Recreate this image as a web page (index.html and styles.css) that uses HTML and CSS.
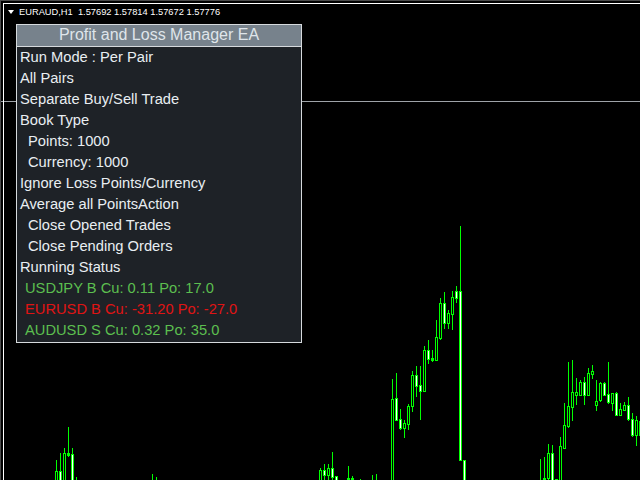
FILE: index.html
```html
<!DOCTYPE html>
<html>
<head>
<meta charset="utf-8">
<link rel="stylesheet" href="styles.css">
</head>
<body>
<div class="screen">
  <svg class="plot" width="640" height="480" viewBox="0 0 640 480" shape-rendering="crispEdges">
    <rect class="pl" x="0" y="101" width="640" height="1"/>
    <g class="g">
      <rect x="56" y="460" width="1" height="20"/><rect x="55" y="471" width="3" height="10"/>
      <rect x="60" y="453" width="1" height="27"/><rect x="59" y="471" width="3" height="10"/>
      <rect x="64" y="448" width="1" height="32"/><rect x="63" y="453" width="3" height="28"/>
      <rect x="68" y="427" width="1" height="30"/><rect x="67" y="453" width="3" height="3"/>
      <rect x="72" y="448" width="1" height="32"/><rect x="71" y="454" width="3" height="27"/>
      <rect x="76" y="477" width="1" height="3"/>
      <rect x="152" y="474" width="1" height="6"/>
      <rect x="156" y="477" width="1" height="3"/>
      <rect x="320" y="468" width="1" height="12"/><rect x="319" y="470" width="3" height="11"/>
      <rect x="324" y="464" width="1" height="16"/><rect x="323" y="470" width="3" height="6"/>
      <rect x="328" y="464" width="1" height="16"/><rect x="327" y="468" width="3" height="8"/>
      <rect x="332" y="452" width="1" height="28"/><rect x="331" y="468" width="3" height="10"/>
      <rect x="335" y="476" width="3" height="5"/>
      <rect x="348" y="466" width="1" height="14"/><rect x="347" y="478" width="3" height="3"/>
      <rect x="352" y="476" width="1" height="4"/><rect x="351" y="478" width="3" height="3"/>
      <rect x="360" y="479" width="1" height="1"/>
      <rect x="372" y="475" width="1" height="5"/>
      <rect x="376" y="474" width="1" height="6"/>
      <rect x="392" y="379" width="1" height="101"/><rect x="391" y="399" width="3" height="82"/>
      <rect x="396" y="373" width="1" height="47"/><rect x="395" y="398" width="3" height="23"/>
      <rect x="400" y="409" width="1" height="21"/><rect x="399" y="419" width="3" height="10"/>
      <rect x="404" y="420" width="1" height="18"/><rect x="403" y="423" width="3" height="6"/>
      <rect x="408" y="404" width="1" height="26"/><rect x="407" y="406" width="3" height="19"/>
      <rect x="412" y="371" width="1" height="41"/><rect x="411" y="375" width="3" height="32"/>
      <rect x="416" y="366" width="1" height="31"/><rect x="415" y="375" width="3" height="12"/>
      <rect x="420" y="366" width="1" height="54"/><rect x="419" y="385" width="3" height="7"/>
      <rect x="424" y="346" width="1" height="45"/><rect x="423" y="350" width="3" height="42"/>
      <rect x="428" y="340" width="1" height="24"/><rect x="427" y="350" width="3" height="10"/>
      <rect x="432" y="350" width="1" height="12"/><rect x="431" y="358" width="3" height="3"/>
      <rect x="436" y="320" width="1" height="40"/><rect x="435" y="337" width="3" height="24"/>
      <rect x="440" y="298" width="1" height="42"/><rect x="439" y="303" width="3" height="36"/>
      <rect x="444" y="292" width="1" height="37"/><rect x="443" y="303" width="3" height="21"/>
      <rect x="448" y="310" width="1" height="19"/><rect x="447" y="313" width="3" height="11"/>
      <rect x="452" y="291" width="1" height="39"/><rect x="451" y="297" width="3" height="18"/>
      <rect x="456" y="286" width="1" height="17"/><rect x="455" y="291" width="3" height="8"/>
      <rect x="460" y="226" width="1" height="234"/><rect x="459" y="291" width="3" height="170"/>
      <rect x="463" y="460" width="3" height="21"/>
      <rect x="540" y="459" width="1" height="21"/>
      <rect x="544" y="457" width="1" height="23"/><rect x="543" y="478" width="3" height="3"/>
      <rect x="548" y="444" width="1" height="36"/><rect x="547" y="453" width="3" height="26"/>
      <rect x="552" y="445" width="1" height="35"/><rect x="551" y="453" width="3" height="28"/>
      <rect x="555" y="479" width="3" height="2"/>
      <rect x="560" y="437" width="1" height="43"/><rect x="559" y="446" width="3" height="35"/>
      <rect x="564" y="403" width="1" height="46"/><rect x="563" y="425" width="3" height="24"/>
      <rect x="568" y="362" width="1" height="66"/><rect x="567" y="406" width="3" height="21"/>
      <rect x="572" y="360" width="1" height="61"/><rect x="571" y="392" width="3" height="16"/>
      <rect x="576" y="378" width="1" height="27"/><rect x="575" y="392" width="3" height="4"/>
      <rect x="580" y="380" width="1" height="16"/><rect x="579" y="382" width="3" height="14"/>
      <rect x="584" y="377" width="1" height="28"/><rect x="583" y="382" width="3" height="14"/>
      <rect x="588" y="368" width="1" height="28"/><rect x="587" y="373" width="3" height="23"/>
      <rect x="592" y="365" width="1" height="14"/><rect x="591" y="371" width="3" height="4"/>
      <rect x="596" y="380" width="1" height="31"/><rect x="595" y="401" width="3" height="5"/>
      <rect x="600" y="382" width="1" height="20"/><rect x="599" y="383" width="3" height="18"/>
      <rect x="604" y="382" width="1" height="14"/><rect x="603" y="383" width="3" height="13"/>
      <rect x="608" y="362" width="1" height="42"/><rect x="607" y="394" width="3" height="9"/>
      <rect x="612" y="393" width="1" height="18"/><rect x="611" y="393" width="3" height="11"/>
      <rect x="616" y="392" width="1" height="24"/><rect x="615" y="393" width="3" height="23"/>
      <rect x="620" y="403" width="1" height="13"/><rect x="619" y="409" width="3" height="7"/>
      <rect x="624" y="402" width="1" height="9"/><rect x="623" y="405" width="3" height="6"/>
      <rect x="628" y="397" width="1" height="24"/><rect x="627" y="405" width="3" height="15"/>
      <rect x="632" y="413" width="1" height="24"/><rect x="631" y="419" width="3" height="17"/>
      <rect x="636" y="416" width="1" height="30"/><rect x="635" y="420" width="3" height="16"/>
      <rect x="639" y="421" width="3" height="15"/>
    </g>
    <g class="wf">
      <rect x="60" y="472" width="1" height="9"/>
      <rect x="72" y="455" width="1" height="26"/>
      <rect x="324" y="471" width="1" height="4"/>
      <rect x="332" y="469" width="1" height="8"/>
      <rect x="336" y="477" width="1" height="4"/>
      <rect x="396" y="399" width="1" height="21"/>
      <rect x="400" y="420" width="1" height="8"/>
      <rect x="416" y="376" width="1" height="10"/>
      <rect x="420" y="386" width="1" height="5"/>
      <rect x="428" y="351" width="1" height="8"/>
      <rect x="444" y="304" width="1" height="19"/>
      <rect x="456" y="292" width="1" height="6"/>
      <rect x="460" y="292" width="1" height="168"/>
      <rect x="464" y="461" width="1" height="20"/>
      <rect x="552" y="454" width="1" height="27"/>
      <rect x="584" y="383" width="1" height="12"/>
      <rect x="604" y="384" width="1" height="11"/>
      <rect x="608" y="395" width="1" height="7"/>
      <rect x="616" y="394" width="1" height="21"/>
      <rect x="628" y="406" width="1" height="13"/>
      <rect x="632" y="420" width="1" height="15"/>
    </g>
    <g class="bf">
      <rect x="56" y="472" width="1" height="9"/>
      <rect x="64" y="454" width="1" height="27"/>
      <rect x="320" y="471" width="1" height="10"/>
      <rect x="328" y="469" width="1" height="6"/>
      <rect x="392" y="400" width="1" height="81"/>
      <rect x="404" y="424" width="1" height="4"/>
      <rect x="408" y="407" width="1" height="17"/>
      <rect x="412" y="376" width="1" height="30"/>
      <rect x="424" y="351" width="1" height="40"/>
      <rect x="436" y="338" width="1" height="22"/>
      <rect x="440" y="304" width="1" height="34"/>
      <rect x="448" y="314" width="1" height="9"/>
      <rect x="452" y="298" width="1" height="16"/>
      <rect x="548" y="454" width="1" height="24"/>
      <rect x="560" y="447" width="1" height="34"/>
      <rect x="564" y="426" width="1" height="22"/>
      <rect x="568" y="407" width="1" height="19"/>
      <rect x="572" y="393" width="1" height="14"/>
      <rect x="576" y="393" width="1" height="2"/>
      <rect x="580" y="383" width="1" height="12"/>
      <rect x="588" y="374" width="1" height="21"/>
      <rect x="592" y="372" width="1" height="2"/>
      <rect x="596" y="402" width="1" height="3"/>
      <rect x="600" y="384" width="1" height="16"/>
      <rect x="612" y="394" width="1" height="9"/>
      <rect x="620" y="410" width="1" height="5"/>
      <rect x="624" y="406" width="1" height="4"/>
      <rect x="636" y="421" width="1" height="14"/>
    </g>
  </svg>

  <div class="chart">
    <div class="header">
      <span class="tri"></span>
      <span class="quote">EURAUD,H1  1.57692 1.57814 1.57672 1.57776</span>
    </div>
  </div>

  <div class="panel">
    <div class="title">Profit and Loss Manager EA</div>
    <div class="rows">
      <div class="row">Run Mode : Per Pair</div>
      <div class="row">All Pairs</div>
      <div class="row">Separate Buy/Sell Trade</div>
      <div class="row">Book Type</div>
      <div class="row sub">Points: 1000</div>
      <div class="row sub">Currency: 1000</div>
      <div class="row">Ignore Loss Points/Currency</div>
      <div class="row">Average all PointsAction</div>
      <div class="row sub">Close Opened Trades</div>
      <div class="row sub">Close Pending Orders</div>
      <div class="row">Running Status</div>
      <div class="row stat up">USDJPY B Cu: 0.11 Po: 17.0</div>
      <div class="row stat down">EURUSD B Cu: -31.20 Po: -27.0</div>
      <div class="row stat up">AUDUSD S Cu: 0.32 Po: 35.0</div>
    </div>
  </div>
</div>
</body>
</html>
```

FILE: styles.css
```css
html, body {
  margin: 0;
  padding: 0;
  background: #000;
}

.screen {
  position: relative;
  width: 640px;
  height: 480px;
  overflow: hidden;
  background: #000;
  box-sizing: border-box;
  border-top: 1px solid #4a4a4a;
  border-left: 1px solid #4a4a4a;
}

.plot {
  position: absolute;
  left: -1px;
  top: -1px;
  display: block;
}

.pl { fill: #9ea3a8; }
.g rect { fill: #00ff00; }
.wf rect { fill: #ffffff; }
.bf rect { fill: #000000; }

.chart {
  position: relative;
  margin: 2px 0 0 2px;
  height: 476px;
  border-top: 1px solid #ffffff;
  border-left: 1px solid #ffffff;
}

.header {
  display: flex;
  align-items: flex-start;
  padding: 2px 0 0 4px;
  font-family: "Liberation Sans", Arial, sans-serif;
  font-size: 9.3px;
  line-height: 12px;
  color: #ffffff;
}

.tri {
  width: 0;
  height: 0;
  margin-top: 4px;
  margin-right: 5px;
  border-left: 3px solid transparent;
  border-right: 3px solid transparent;
  border-top: 4px solid #ffffff;
}

.quote {
  white-space: pre;
}

.panel {
  position: absolute;
  left: 15px;
  top: 23px;
  width: 286px;
  box-sizing: border-box;
  border: 1px solid #d6dadd;
  background: #1e2227;
  font-family: "Liberation Sans", Arial, sans-serif;
}

.title {
  height: 21px;
  line-height: 19px;
  border-bottom: 1px solid #d6dadd;
  background: #77828c;
  color: #dfe5ea;
  font-size: 16px;
  text-align: center;
}

.rows {
  padding-bottom: 1px;
}

.row {
  height: 21px;
  line-height: 21px;
  padding-left: 3px;
  font-size: 14.7px;
  color: #e9eef2;
  white-space: nowrap;
}

.row.sub { padding-left: 11px; }
.row.stat { padding-left: 8px; }
.row.up { color: #5cbf4f; }
.row.down { color: #e01414; }
```
